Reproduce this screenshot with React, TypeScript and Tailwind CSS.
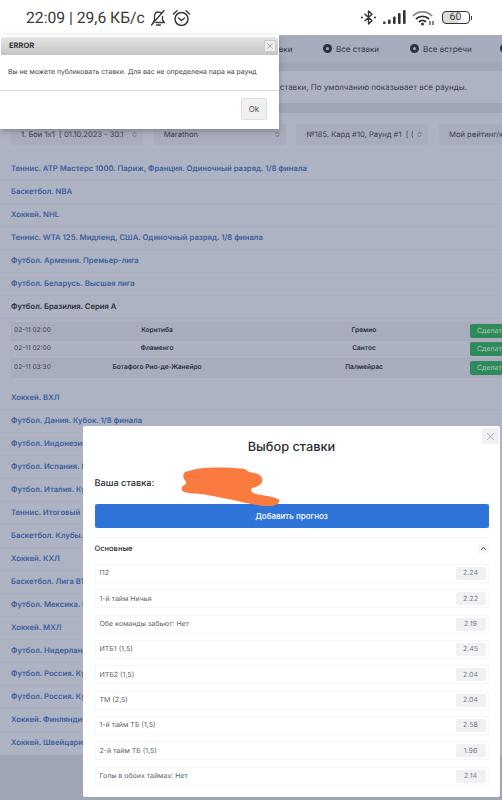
import { X, ChevronUp, ChevronsUpDown } from "lucide-react";

const leaguesTop = [
  "Теннис. ATP Мастерс 1000. Париж, Франция. Одиночный разряд. 1/8 финала",
  "Баскетбол. NBA",
  "Хоккей. NHL",
  "Теннис. WTA 125. Мидленд, США. Одиночный разряд. 1/8 финала",
  "Футбол. Армения. Премьер-лига",
  "Футбол. Беларусь. Высшая лига",
];

const leaguesBottom = [
  "Хоккей. ВХЛ",
  "Футбол. Дания. Кубок. 1/8 финала",
  "Футбол. Индонезия. Лига 1",
  "Футбол. Испания. Кубок Испании",
  "Футбол. Италия. Кубок Италии",
  "Теннис. Итоговый турнир WTA",
  "Баскетбол. Клубы. Кубок Европы",
  "Хоккей. КХЛ",
  "Баскетбол. Лига ВТБ",
  "Футбол. Мексика. Премьер-лига",
  "Хоккей. МХЛ",
  "Футбол. Нидерланды. Кубок",
  "Футбол. Россия. Кубок России",
  "Футбол. Россия. Кубок ФНЛ",
  "Хоккей. Финляндия. Лига",
  "Хоккей. Швейцария. Лига",
];

const matches = [
  { time: "02-11 02:00", home: "Коритиба", away: "Гремио" },
  { time: "02-11 02:00", home: "Фламенго", away: "Сантос" },
  { time: "02-11 03:30", home: "Ботафого Рио-де-Жанейро", away: "Палмейрас" },
];

const bets = [
  { name: "П2", odd: "2.24" },
  { name: "1-й тайм Ничья", odd: "2.22" },
  { name: "Обе команды забьют: Нет", odd: "2.19" },
  { name: "ИТБ1 (1,5)", odd: "2.45" },
  { name: "ИТБ2 (1,5)", odd: "2.04" },
  { name: "ТМ (2,5)", odd: "2.04" },
  { name: "1-й тайм ТБ (1,5)", odd: "2.58" },
  { name: "2-й тайм ТБ (1,5)", odd: "1.96" },
  { name: "Голы в обоих таймах: Нет", odd: "2.14" },
];

const selects = ["1. Бои 1х1  [ 01.10.2023 - 30.1", "Marathon", "№185. Кард #10, Раунд #1  [ (", "Мой рейтинг/к"];

const League = ({ title, dark }: { title: string; dark?: boolean }) => (
  <div
    className={`h-[23px] shrink-0 flex items-center px-[11px] border-b border-[#a8aebd] text-[7.7px] font-semibold whitespace-nowrap overflow-hidden ${
      dark ? "text-[#2b303c]" : "text-[#3d5f9f]"
    }`}
  >
    {title}
  </div>
);

const NavDot = () => (
  <span className="w-[9px] h-[9px] shrink-0 rounded-full bg-[#2c3240] flex items-center justify-center">
    <span className="w-[3px] h-[3px] rounded-full bg-[#a6acbc]" />
  </span>
);

const BellMuted = () => (
  <svg width="16" height="18" viewBox="0 0 16 18" fill="none" stroke="#3a3a3a" strokeWidth="1.3" strokeLinejoin="round" strokeLinecap="round">
    <path d="M3 13.5 L4.5 11 V7.5 C4.5 4.5 6.5 3 8.5 3 C10 3 11 3.6 11.8 4.6" />
    <path d="M12.5 7.5 V11 L14.5 13.5 H6" />
    <path d="M6.5 16 H10.5" />
    <path d="M1.5 16 L14 1.5" />
  </svg>
);

const AlarmIcon = () => (
  <svg width="19" height="18" viewBox="0 0 19 18" fill="none" stroke="#3a3a3a" strokeWidth="1.5" strokeLinecap="round" strokeLinejoin="round">
    <circle cx="9.5" cy="10" r="6.5" />
    <path d="M1.5 5 L5 1.8" />
    <path d="M17.5 5 L14 1.8" />
    <path d="M6.5 9 L9.5 11.5 L12.5 9" />
  </svg>
);

const BluetoothIcon = () => (
  <svg width="17" height="17" viewBox="0 0 17 17" fill="none" stroke="#333" strokeWidth="1.4" strokeLinejoin="round">
    <path d="M4.5 4.8 L12 11.8 L8.5 15 V2 L12 5.2 L4.5 12.2" />
    <circle cx="2" cy="8.5" r="1" fill="#333" stroke="none" />
    <circle cx="15" cy="8.5" r="1" fill="#333" stroke="none" />
  </svg>
);

const SignalBars = () => (
  <svg width="23" height="15" viewBox="0 0 23 15" fill="#333">
    <rect x="0" y="11.5" width="2.6" height="2.5" rx="1" />
    <rect x="5" y="9.5" width="2.6" height="4.5" rx="1" />
    <rect x="10" y="6.5" width="2.6" height="7.5" rx="1" />
    <rect x="15" y="3" width="2.6" height="11" rx="1" />
    <rect x="20" y="0" width="2.6" height="14" rx="1" />
  </svg>
);

const WifiIcon = () => (
  <svg width="23" height="16" viewBox="0 0 23 16" fill="none" strokeLinecap="butt">
    <path d="M1 6 C6 0.5 15 0.5 20 6" stroke="#8a8a8a" strokeWidth="1.8" />
    <path d="M4 9 C7.5 5.5 13.5 5.5 17 9" stroke="#333" strokeWidth="1.8" />
    <path d="M7 12 C9 10 12 10 14 12" stroke="#333" strokeWidth="1.8" />
    <circle cx="10.5" cy="14" r="1.5" fill="#333" />
    <path d="M18 11 V15 M21 11 V15" stroke="#333" strokeWidth="1.2" />
  </svg>
);

export default function App() {
  return (
    <div
      className="relative w-[502px] h-[800px] overflow-hidden bg-[#9fa6b6] [text-rendering:geometricPrecision]"
      style={{ fontFamily: "Inter, 'Noto Sans', 'Liberation Sans', sans-serif" }}
    >
      {/* Status bar */}
      <div className="h-[35px] bg-white flex items-center justify-between pl-[26px] pr-[30px] text-[#3a3a3a]">
        <div className="flex items-center gap-[5px] text-[15.7px] font-[Roboto] leading-none">
          <span>22:09 | 29,6 КБ/с</span>
          <BellMuted />
          <span className="ml-[1px]">
            <AlarmIcon />
          </span>
        </div>
        <div className="flex items-center gap-[6px]">
          <BluetoothIcon />
          <SignalBars />
          <WifiIcon />
          <div className="flex items-center ml-[1px]">
            <div className="w-[28px] h-[13px] rounded-[4px] border border-[#333] text-[10.5px] leading-none flex items-center justify-center font-[Roboto] bg-linear-to-r from-[#ddd] from-60% to-white to-60%">
              60
            </div>
            <span className="w-[1.5px] h-[4px] bg-[#333] ml-[1px]" />
          </div>
        </div>
      </div>

      {/* Nav */}
      <div className="h-[27px] bg-[#a6acbc] flex items-center pl-[266px] text-[8px] text-[#2f3542] whitespace-nowrap overflow-hidden">
        <span className="w-[57px] shrink-0">ставки</span>
        <span className="w-[87px] shrink-0 flex items-center gap-[4px]"><NavDot />Все ставки</span>
        <span className="w-[90px] shrink-0 flex items-center gap-[4px]"><NavDot />Все встречи</span>
        <NavDot />
      </div>
      <div className="h-[9px] bg-[#9fa6b6]" />

      {/* Hint */}
      <div className="h-[32px] bg-[#adb3c2] flex items-center justify-end pr-[35px] text-[8px] text-[#3a404e] whitespace-nowrap">
        Показываются ставки, По умолчанию показывает все раунды.
      </div>
      <div className="h-[10px] bg-[#9fa6b6]" />

      {/* Main */}
      <div className="bg-[#adb3c2] h-[642px] flex flex-col">
        <div className="h-[45px] pt-[11px] pl-[11px] flex gap-[10.7px] overflow-hidden shrink-0">
          {selects.map((s) => (
            <div
              key={s}
              className="w-[132px] h-[21px] shrink-0 rounded-[3px] bg-[#a7adbc] flex items-center justify-between pl-[10px] pr-[5px] text-[7.6px] text-[#3a404e] whitespace-pre overflow-hidden"
            >
              <span className="overflow-hidden">{s}</span>
              <ChevronsUpDown size={7} className="shrink-0" />
            </div>
          ))}
        </div>

        {leaguesTop.map((l) => (
          <League key={l} title={l} />
        ))}
        <League title="Футбол. Бразилия. Серия А" dark />

        <div className="h-[56px] shrink-0 pl-[11px] mt-[3px] mb-[9px]">
          {matches.map((m, i) => (
            <div
              key={m.home}
              className={`h-[18.5px] flex items-center text-[6.6px] border-b border-[#a4aab9] ${
                i % 2 === 0 ? "bg-[#a7adbc]" : "bg-[#acb2c1]"
              }`}
            >
              <span className="w-[41px] pl-[3px] text-[#3f4552] whitespace-nowrap shrink-0">{m.time}</span>
              <span className="w-[210px] text-center font-semibold text-[#2b303c] whitespace-nowrap shrink-0">{m.home}</span>
              <span className="w-[204px] text-center font-semibold text-[#2b303c] whitespace-nowrap shrink-0">{m.away}</span>
              <span className="ml-auto h-[14px] w-[32px] rounded-l-[2px] bg-[#2f8a5b] text-[#a9c9b8] pl-[7px] overflow-hidden whitespace-nowrap flex items-center text-[7px]">
                Сделать
              </span>
            </div>
          ))}
        </div>

        {leaguesBottom.map((l) => (
          <League key={l} title={l} />
        ))}
      </div>

      {/* Error dialog */}
      <div className="absolute left-0 top-[35px] w-[279px] h-[94px] bg-white shadow-[0_2px_6px_rgba(0,0,0,0.25)] flex flex-col">
        <div className="h-[18px] mt-[2px] mx-[1px] rounded-t-[3px] bg-linear-to-b from-[#e6e6e6] to-[#c4c4c4] flex items-center justify-between pl-[8px] pr-[2px] text-[7.5px] font-bold text-[#333]">
          <span>ERROR</span>
          <span className="w-[12px] h-[12px] bg-[#eee] border border-[#ccc] flex items-center justify-center">
            <X size={10} strokeWidth={1.5} className="text-[#888]" />
          </span>
        </div>
        <div className="h-[36px] border-b border-[#ddd] pl-[8px] pt-[11px] text-[6.85px] leading-[11px] text-[#444] whitespace-nowrap">
          Вы не можете публиковать ставки. Для вас не определена пара на раунд
        </div>
        <div className="flex justify-end pt-[7px] pr-[12px]">
          <button className="w-[26px] h-[22px] rounded-[2px] bg-[#f0f0f0] border border-[#ddd] text-[8px] text-[#555]">Ok</button>
        </div>
      </div>

      {/* Bet modal */}
      <div className="absolute left-[83px] top-[426px] w-[417px] h-[371px] bg-white rounded-[2px] px-[11.5px] flex flex-col text-[#2b2f36]">
        <button className="absolute right-[1px] top-[2px] w-[17px] h-[16px] bg-[#f0f1f4] flex items-center justify-center">
          <X size={13} strokeWidth={1.5} className="text-[#9aa0aa]" />
        </button>
        <h2 className="text-[12.8px] font-medium text-center mt-[13px] leading-[18px]">Выбор ставки</h2>
        <div className="text-[9.2px] font-medium mt-[20px] leading-[14px]">Ваша ставка:</div>
        <button className="mt-[13px] h-[24px] rounded-[2px] bg-[#2f74d9] text-white text-[8px] font-medium">Добавить прогноз</button>
        <div className="flex items-center justify-between mt-[9px] border-t border-[#f3f4f6] h-[27px] pb-[5px] text-[7.5px] font-medium">
          <span>Основные</span>
          <span className="w-[11px] h-[10px] flex items-center justify-center bg-[#f7f7f8] rounded-[2px]">
            <ChevronUp size={9} strokeWidth={2.5} />
          </span>
        </div>
        <div className="flex flex-col gap-[6.33px]">
          {bets.map((b) => (
            <div
              key={b.name}
              className="h-[19px] rounded-[2px] border border-[#f5f6f7] flex items-center justify-between pl-[4px] pr-[2px] text-[7px] text-[#5a5f68]"
            >
              <span>{b.name}</span>
              <span className="w-[30px] h-[13px] bg-[#f0f1f4] rounded-[2px] flex items-center justify-center text-[#7a7e87]">{b.odd}</span>
            </div>
          ))}
        </div>
      </div>

      {/* Scribble over the stake value */}
      <svg className="absolute left-[181px] top-[467px]" width="100" height="40" viewBox="333 140 300 120">
        <path
          d="M345 155 C370 146 395 142 420 142 C450 141 490 142 520 145 C530 148 532 153 540 156 C560 158 575 163 577 175 C580 190 565 198 545 204 C540 212 548 218 560 222 C585 226 610 230 625 236 C631 243 628 252 610 256 C590 260 560 254 540 250 C515 245 490 238 470 235 C445 230 420 226 400 222 C380 220 355 219 342 215 C332 210 333 200 342 195 C350 190 350 186 345 180 C338 172 338 162 345 155 Z"
          fill="#fb7a3f"
        />
      </svg>
    </div>
  );
}
